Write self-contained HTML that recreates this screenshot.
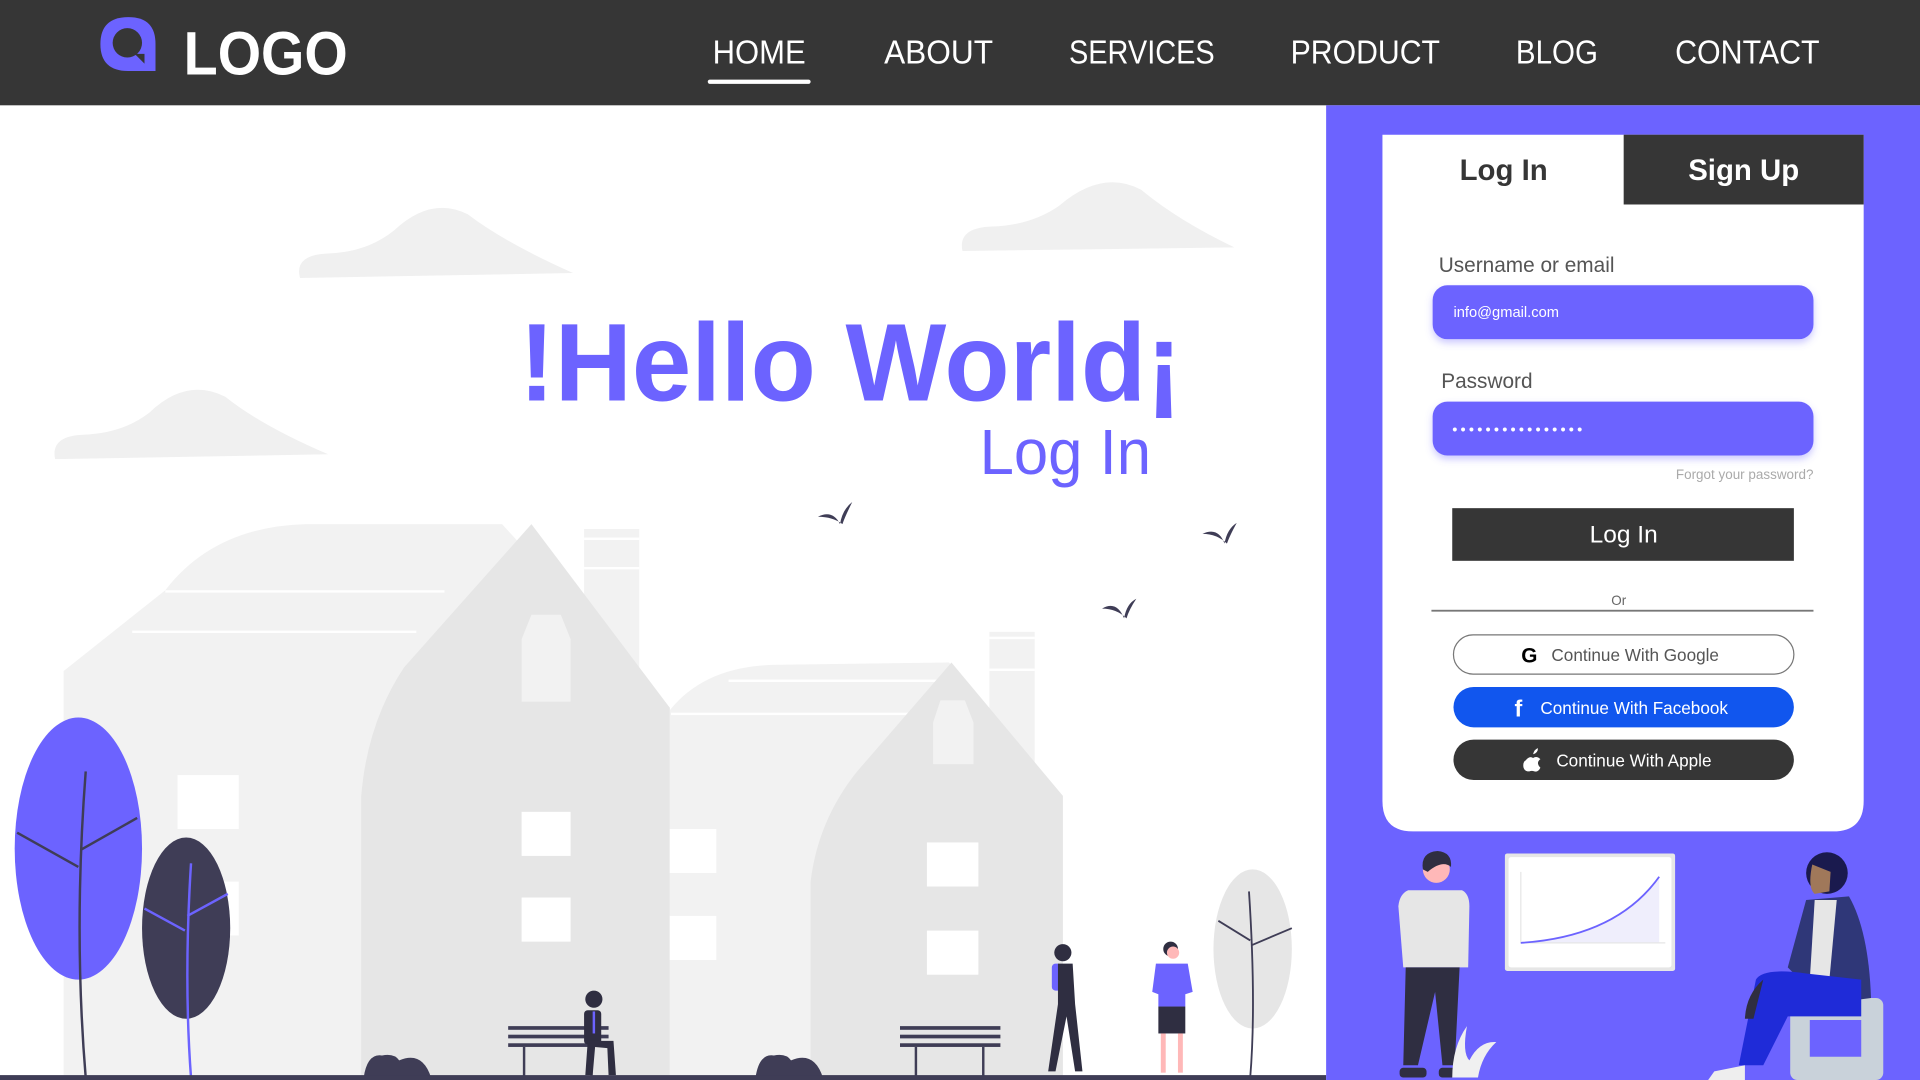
<!DOCTYPE html>
<html><head><meta charset="utf-8"><style>
html,body{margin:0;padding:0;width:1920px;height:1080px;overflow:hidden;background:#fff}
svg{display:block}
text{font-family:"Liberation Sans",sans-serif}
</style></head><body>
<svg width="1920" height="1080" viewBox="0 0 1568 882" preserveAspectRatio="none" xmlns="http://www.w3.org/2000/svg">
<rect x="0" y="0" width="1568" height="882" fill="#fff"/>
<path d="M245 227 Q240 208 268 207 Q300 206 322 188 Q352 160 382 175 Q412 198 468 223 Z" fill="#f0f0f0"/>
<path d="M786 205 Q782 186 810 185 Q842 184 865 168 Q900 138 932 155 Q962 180 1008 202 Z" fill="#f0f0f0"/>
<path d="M45 375 Q41 356 68 355 Q100 354 122 337 Q152 308 184 324 Q214 348 268 371 Z" fill="#f0f0f0"/>
<path d="M52 880 L52 548 L135 482 Q175 430 250 428 L410 428 L547 578 L547 880 Z" fill="#f2f2f2"/>
<rect x="477" y="432" width="45" height="120" fill="#f2f2f2"/>
<rect x="477" y="439" width="45" height="2" fill="#fff"/><rect x="477" y="463" width="45" height="2" fill="#fff"/>
<rect x="135" y="482" width="228" height="2" fill="#fff"/><rect x="108" y="515" width="232" height="2" fill="#fff"/>
<rect x="145" y="633" width="50" height="44" fill="#fff"/><rect x="145" y="720" width="50" height="44" fill="#fff"/>
<path d="M295 880 L295 650 Q300 590 330 545 L434 428 L547 578 L547 880 Z" fill="#e6e6e6"/>
<path d="M426 573 L426 522 L434 502 L458 502 L466 522 L466 573 Z" fill="#f2f2f2"/>
<rect x="426" y="663" width="40" height="36" fill="#fff"/><rect x="426" y="733" width="40" height="36" fill="#fff"/>
<path d="M547 880 L547 580 Q575 545 630 543 L775 541 L868 650 L868 880 Z" fill="#f2f2f2"/>
<rect x="808" y="516" width="37" height="120" fill="#f2f2f2"/>
<rect x="808" y="520" width="37" height="2" fill="#fff"/><rect x="808" y="546" width="37" height="2" fill="#fff"/>
<rect x="595" y="555" width="178" height="2" fill="#fff"/><rect x="548" y="582" width="200" height="2" fill="#fff"/>
<rect x="547" y="677" width="38" height="36" fill="#fff"/><rect x="547" y="748" width="38" height="36" fill="#fff"/>
<path d="M662 880 L662 720 Q668 670 700 630 L777 541 L868 650 L868 880 Z" fill="#e6e6e6"/>
<path d="M762 624 L762 590 L768 572 L788 572 L795 590 L795 624 Z" fill="#f2f2f2"/>
<rect x="757" y="688" width="42" height="36" fill="#fff"/><rect x="757" y="760" width="42" height="36" fill="#fff"/>
<ellipse cx="64" cy="693" rx="52" ry="107" fill="#6c63ff"/>
<path d="M70 880 Q60 760 70 630 M64 708 L14 680 M66 694 L112 668" stroke="#3f3d56" stroke-width="2" fill="none"/>
<ellipse cx="152" cy="758" rx="36" ry="74" fill="#3f3d56"/>
<path d="M156 880 Q150 800 156 705 M151 760 L118 742 M153 748 L186 730" stroke="#6c63ff" stroke-width="2" fill="none"/>
<ellipse cx="1023" cy="775" rx="32" ry="65" fill="#e6e6e6"/>
<path d="M1021 880 Q1026 820 1020 728 M1021 768 L995 752 M1022 772 L1055 758" stroke="#3f3d56" stroke-width="1.5" fill="none"/>
<path d="M297 880 Q300 860 312 862 Q322 860 326 866 Q345 858 352 880 Z" fill="#3f3d56"/>
<path d="M617 880 Q620 860 632 862 Q642 860 646 866 Q665 858 672 880 Z" fill="#3f3d56"/>
<g fill="#3f3d56"><rect x="415" y="838" width="82" height="3"/><rect x="415" y="845" width="82" height="3"/><rect x="415" y="852" width="82" height="3"/><rect x="427" y="855" width="2" height="25"/><rect x="482" y="855" width="2" height="25"/>
<rect x="735" y="838" width="82" height="3"/><rect x="735" y="845" width="82" height="3"/><rect x="735" y="852" width="82" height="3"/><rect x="747" y="855" width="2" height="25"/><rect x="802" y="855" width="2" height="25"/></g>
<circle cx="485" cy="816" r="7" fill="#2f2e41"/><rect x="477" y="825" width="14" height="28" rx="3" fill="#2f2e41"/><rect x="484" y="826" width="2" height="18" fill="#6c63ff"/>
<path d="M480 850 L478 878 L484 878 L486 855 L496 856 L497 878 L503 878 L501 850 Z" fill="#2f2e41"/>
<circle cx="868" cy="778" r="7" fill="#2f2e41"/><rect x="859" y="787" width="8" height="22" rx="3" fill="#6c63ff"/>
<path d="M864 787 L876 787 L878 820 L884 875 L878 875 L871 830 L862 875 L856 875 L864 820 Z" fill="#2f2e41"/>
<circle cx="956" cy="775" r="6" fill="#2f2e41"/><circle cx="958" cy="778" r="5" fill="#ffb8b8"/>
<path d="M944 787 L970 787 L974 810 L968 812 L968 822 L946 822 L946 812 L941 810 Z" fill="#6c63ff"/>
<rect x="946" y="822" width="22" height="22" fill="#2f2e41"/><rect x="948" y="844" width="4" height="32" fill="#ffb8b8"/><rect x="962" y="844" width="4" height="32" fill="#ffb8b8"/>
<g fill="#3f3d56"><path d="M668 422 Q680 416 686 428 Q688 416 696 410 Q690 422 688 428 Q680 422 668 422Z"/>
<path d="M982 436 Q995 430 1000 444 Q1002 432 1010 427 Q1004 438 1002 444 Q994 436 982 436Z"/>
<path d="M900 497 Q912 490 918 505 Q920 493 928 489 Q922 498 920 505 Q912 497 900 497Z"/></g>
<rect x="0" y="878" width="1083" height="4" fill="#3f3d56"/>
<text x="424" y="327" font-size="90" font-weight="bold" fill="#6c63ff" textLength="541" lengthAdjust="spacingAndGlyphs">!Hello World¡</text>
<text x="800" y="387" font-size="52" fill="#6c63ff" textLength="140" lengthAdjust="spacingAndGlyphs">Log In</text>
<rect x="0" y="0" width="1568" height="86" fill="#363636"/>
<path d="M105 14 Q127 14 127 36 L127 58 L105 58 Q82 58 82 36 Q82 14 105 14Z" fill="#6c63ff"/>
<circle cx="104" cy="35" r="12" fill="#363636"/>
<path d="M110 44 L118 44 L118 52 Z" fill="#363636"/>
<text x="150" y="61" font-size="50" font-weight="bold" fill="#fff" textLength="134" lengthAdjust="spacingAndGlyphs">LOGO</text>
<g font-size="27" fill="#fff">
<text x="582" y="52" textLength="76" lengthAdjust="spacingAndGlyphs">HOME</text>
<text x="722" y="52" textLength="89" lengthAdjust="spacingAndGlyphs">ABOUT</text>
<text x="873" y="52" textLength="119" lengthAdjust="spacingAndGlyphs">SERVICES</text>
<text x="1054" y="52" textLength="122" lengthAdjust="spacingAndGlyphs">PRODUCT</text>
<text x="1238" y="52" textLength="67" lengthAdjust="spacingAndGlyphs">BLOG</text>
<text x="1368" y="52" textLength="118" lengthAdjust="spacingAndGlyphs">CONTACT</text>
</g>
<rect x="578" y="65" width="84" height="3.5" rx="1.7" fill="#fff"/>
<rect x="1083" y="86" width="485" height="796" fill="#6c63ff"/>
<path d="M1129 110 H1522 V654 Q1522 679 1497 679 H1154 Q1129 679 1129 654 Z" fill="#fff"/>
<rect x="1326" y="110" width="196" height="57" fill="#363636"/>
<text x="1228" y="147" font-size="24" font-weight="bold" fill="#363636" text-anchor="middle">Log In</text>
<text x="1424" y="147" font-size="24" font-weight="bold" fill="#fff" text-anchor="middle">Sign Up</text>
<text x="1175" y="222" font-size="17" fill="#555">Username or email</text>
<defs><filter id="sh" x="-10%" y="-30%" width="120%" height="170%"><feDropShadow dx="0" dy="3" stdDeviation="3" flood-color="#6c63ff" flood-opacity="0.35"/></filter></defs>
<rect x="1170" y="233" width="311" height="44" rx="12" fill="#6c63ff" filter="url(#sh)"/>
<text x="1187" y="259" font-size="12" fill="#fff">info@gmail.com</text>
<text x="1177" y="317" font-size="17" fill="#555">Password</text>
<rect x="1170" y="328" width="311" height="44" rx="12" fill="#6c63ff" filter="url(#sh)"/>
<text x="1186" y="355" font-size="12" fill="#fff" letter-spacing="2.6">••••••••••••••••</text>
<text x="1481" y="391" font-size="11" fill="#aaa" text-anchor="end">Forgot your password?</text>
<rect x="1186" y="415" width="279" height="43" fill="#363636"/>
<text x="1326" y="443" font-size="20" fill="#fff" text-anchor="middle">Log In</text>
<text x="1322" y="494" font-size="11" fill="#666" text-anchor="middle">Or</text>
<rect x="1169" y="498" width="312" height="1.5" fill="#777"/>
<rect x="1187" y="518.5" width="278" height="32" rx="16" fill="#fff" stroke="#777" stroke-width="1"/>
<text x="1249" y="541" font-size="17" font-weight="bold" fill="#000" text-anchor="middle">G</text>
<text x="1267" y="540" font-size="14" fill="#555">Continue With Google</text>
<rect x="1187" y="561" width="278" height="33" rx="16.5" fill="#1156ee"/>
<text x="1240" y="585" font-size="19" font-weight="bold" fill="#fff" text-anchor="middle">f</text>
<text x="1258" y="583" font-size="14" fill="#fff">Continue With Facebook</text>
<rect x="1187" y="604" width="278" height="33" rx="16.5" fill="#363636"/>
<path d="M1252 616 Q1253 612 1256 611 Q1256 615 1252 616Z M1246 621 Q1249 617 1252 619 Q1255 617 1258 620 Q1254 623 1258 627 Q1256 631 1253 630 Q1251 629 1249 630 Q1244 630 1244 625 Q1244 622 1246 621Z" fill="#fff"/>
<text x="1271" y="626" font-size="14" fill="#fff">Continue With Apple</text>
<rect x="1229" y="697" width="139" height="96" rx="2" fill="#e6e6e6"/>
<rect x="1232" y="700" width="133" height="90" rx="2" fill="#fff"/>
<path d="M1242 770 Q1300 765 1325 745 Q1340 735 1355 716 L1355 770 Z" fill="#efeefc"/>
<path d="M1242 712 V770 H1360" stroke="#e6e6e6" fill="none"/>
<path d="M1242 770 Q1320 765 1355 716" stroke="#6c63ff" stroke-width="1.5" fill="none"/>
<circle cx="1173" cy="710" r="11" fill="#ffb8b8"/><path d="M1162 710 Q1160 696 1174 695 Q1186 696 1185 708 Q1178 702 1166 712Z" fill="#2f2e41"/>
<path d="M1150 727 L1194 727 Q1200 730 1200 740 L1199 790 L1146 790 L1142 740 Q1143 730 1150 727Z" fill="#e6e6e6"/>
<path d="M1148 790 L1192 790 L1188 870 L1178 870 L1172 810 L1158 870 L1146 870 Z" fill="#2f2e41"/>
<rect x="1143" y="872" width="22" height="8" rx="3" fill="#2f2e41"/><rect x="1175" y="872" width="20" height="8" rx="3" fill="#2f2e41"/>
<path d="M1186 880 Q1186 855 1198 838 Q1194 860 1200 866 Q1208 850 1222 851 Q1210 862 1207 880Z" fill="#f0f0f0"/>
<rect x="1462" y="815" width="76" height="67" rx="6" fill="#c9d2da"/><rect x="1478" y="833" width="42" height="30" fill="#6c63ff"/>
<circle cx="1492" cy="713" r="17" fill="#1a1a4e"/><path d="M1480 706 Q1476 725 1482 730 L1494 728 L1495 712Z" fill="#a0785a"/>
<path d="M1475 735 L1510 732 Q1526 760 1528 815 L1490 820 L1460 790 Z" fill="#2f3778"/>
<path d="M1482 735 L1500 735 L1494 800 L1478 800Z" fill="#e6e6e6"/>
<path d="M1434 800 Q1440 790 1475 795 L1520 800 L1520 830 L1460 830 L1440 870 L1420 870 Z" fill="#1f2bd8"/>
<path d="M1440 800 Q1426 812 1425 832 L1432 832 Z" fill="#2f2e41"/>
<path d="M1400 875 L1425 870 L1425 882 L1395 882Z" fill="#eee"/>
</svg>
</body></html>
